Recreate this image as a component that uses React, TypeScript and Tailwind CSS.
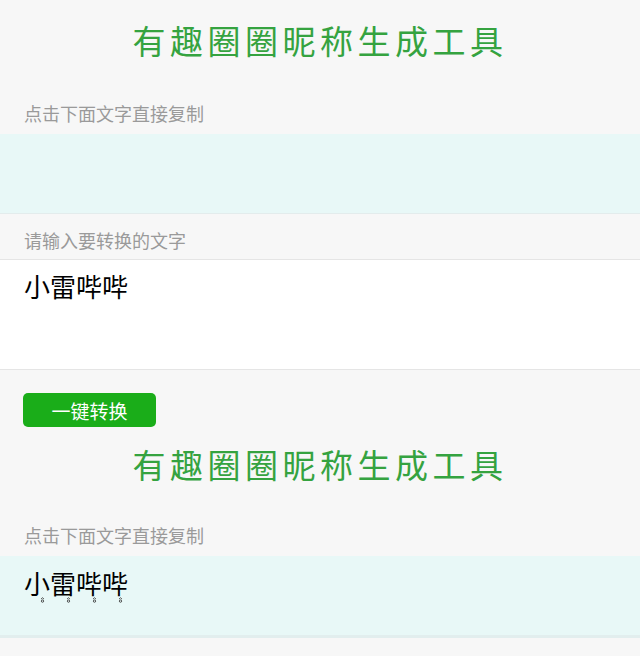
import { useState } from "react";

const FONT = { fontFamily: '"Noto Sans CJK SC", "Noto Sans", sans-serif' };

// 圈圈字：字下面加一个小圈圈
function CircleText({ text }: { text: string }) {
  return (
    <span>
      {Array.from(text).map((c, i) => (
        <span key={i} className="relative inline-block">
          {c}
          <svg
            viewBox="0 0 6 7"
            className="absolute left-[16px] top-[28px] w-[5px] h-[6px]"
            fill="none"
            stroke="#333"
            strokeWidth="1"
          >
            <path d="M1.2 2.4 L3 0.8 L4.8 2.4" />
            <circle cx="3" cy="4.8" r="1.4" />
          </svg>
        </span>
      ))}
    </span>
  );
}

function Title() {
  return (
    <div className="h-[80px] flex items-center justify-center text-[33px] leading-none tracking-[4.5px] text-[#35a340]">
      有趣圈圈昵称生成工具
    </div>
  );
}

function Label({ text }: { text: string }) {
  return (
    <div className="px-6 pt-[21px] pb-[9px] text-[18px] leading-[24px] text-[#9a9a9a]">{text}</div>
  );
}

export default function App() {
  const [input, setInput] = useState("小雷哔哔");
  const [result, setResult] = useState("");

  return (
    <div className="min-h-screen bg-[#f7f7f7] overflow-hidden" style={FONT}>
      <Title />
      <Label text="点击下面文字直接复制" />
      <div className="h-[80px] bg-[#e8f8f7] border-b border-[#e3ecec] px-6 pt-[13px] text-[26px] leading-[28px] text-black">
        {result && <CircleText text={result} />}
      </div>
      <div className="px-6 pt-[14px] pb-[7px] text-[18px] leading-[24px] text-[#9a9a9a]">请输入要转换的文字</div>
      <div className="h-[111px] bg-white border-y border-[#e5e5e5] px-6 pt-[12px]">
        <textarea
          value={input}
          onChange={(e) => setInput(e.target.value)}
          className="w-full h-[80px] resize-none outline-none bg-transparent text-[26px] leading-[28px] text-black"
          style={FONT}
        />
      </div>
      <div className="px-[23px] pt-[23px]">
        <button
          onClick={() => setResult(input)}
          className="w-[133px] h-[34px] rounded-[5px] bg-[#1aad19] text-white text-[19px] leading-none"
        >
          一键转换
        </button>
      </div>
      <div className="h-[75px] flex items-center justify-center text-[33px] leading-none tracking-[4.5px] text-[#35a340]">
        有趣圈圈昵称生成工具
      </div>
      <Label text="点击下面文字直接复制" />
      <div className="h-[82px] bg-[#e8f8f7] border-b-[3px] border-[#e2eeee] px-6 pt-[13px] text-[26px] leading-[28px] text-black">
        <CircleText text={input} />
      </div>
    </div>
  );
}
